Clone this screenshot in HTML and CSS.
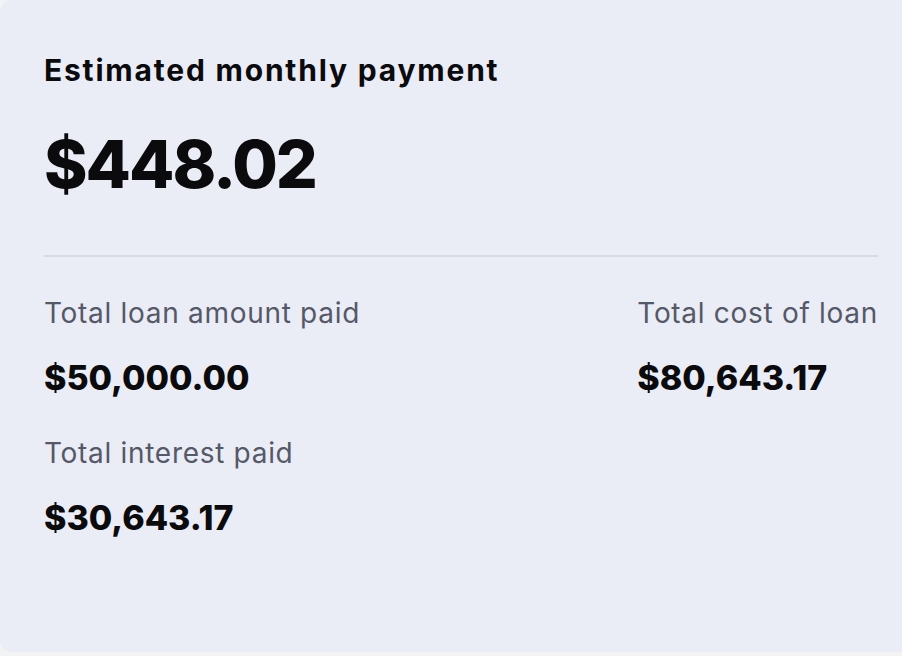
FILE: index.html
```html
<!DOCTYPE html>
<html lang="en">
<head>
<meta charset="utf-8">
<title>Loan summary</title>
<link rel="stylesheet" href="styles.css">
</head>
<body>
<section class="card">
  <h2 class="title">Estimated monthly payment</h2>
  <p class="payment">$448.02</p>
  <hr class="divider">
  <div class="stats">
    <div class="col">
      <div class="stat">
        <div class="label">Total loan amount paid</div>
        <div class="value">$50,000.00</div>
      </div>
      <div class="stat">
        <div class="label">Total interest paid</div>
        <div class="value">$30,643.17</div>
      </div>
    </div>
    <div class="col">
      <div class="stat">
        <div class="label">Total cost of loan</div>
        <div class="value">$80,643.17</div>
      </div>
    </div>
  </div>
</section>
</body>
</html>
```

FILE: styles.css
```css
html, body {
  margin: 0;
  padding: 0;
  background: #f3f3f6;
  height: 100%;
  overflow: hidden;
}
body {
  font-family: Inter, "Liberation Sans", sans-serif;
  color: #0b0b0d;
}
.card {
  box-sizing: border-box;
  width: 930px;
  height: 652px;
  background: #eaecf6;
  border-radius: 12px;
  padding: 52px 52px 0 44px;
}
.title {
  margin: 0;
  font-size: 30px;
  line-height: 36px;
  font-weight: 700;
  letter-spacing: 1.8px;
}
.payment {
  margin: 40px 0 0;
  font-size: 66px;
  line-height: 72px;
  font-weight: 800;
  letter-spacing: -2px;
}
.divider {
  margin: 55px 0 0;
  border: 0;
  height: 2px;
  background: #d8dae3;
}
.stats {
  display: flex;
  justify-content: space-between;
  margin-top: 39px;
}
.col {
  display: flex;
  flex-direction: column;
  gap: 38px;
}
.label {
  font-size: 28px;
  line-height: 34px;
  color: #555866;
  letter-spacing: 0.7px;
}
.value {
  margin-top: 28px;
  font-size: 34px;
  line-height: 40px;
  font-weight: 800;
}
```
